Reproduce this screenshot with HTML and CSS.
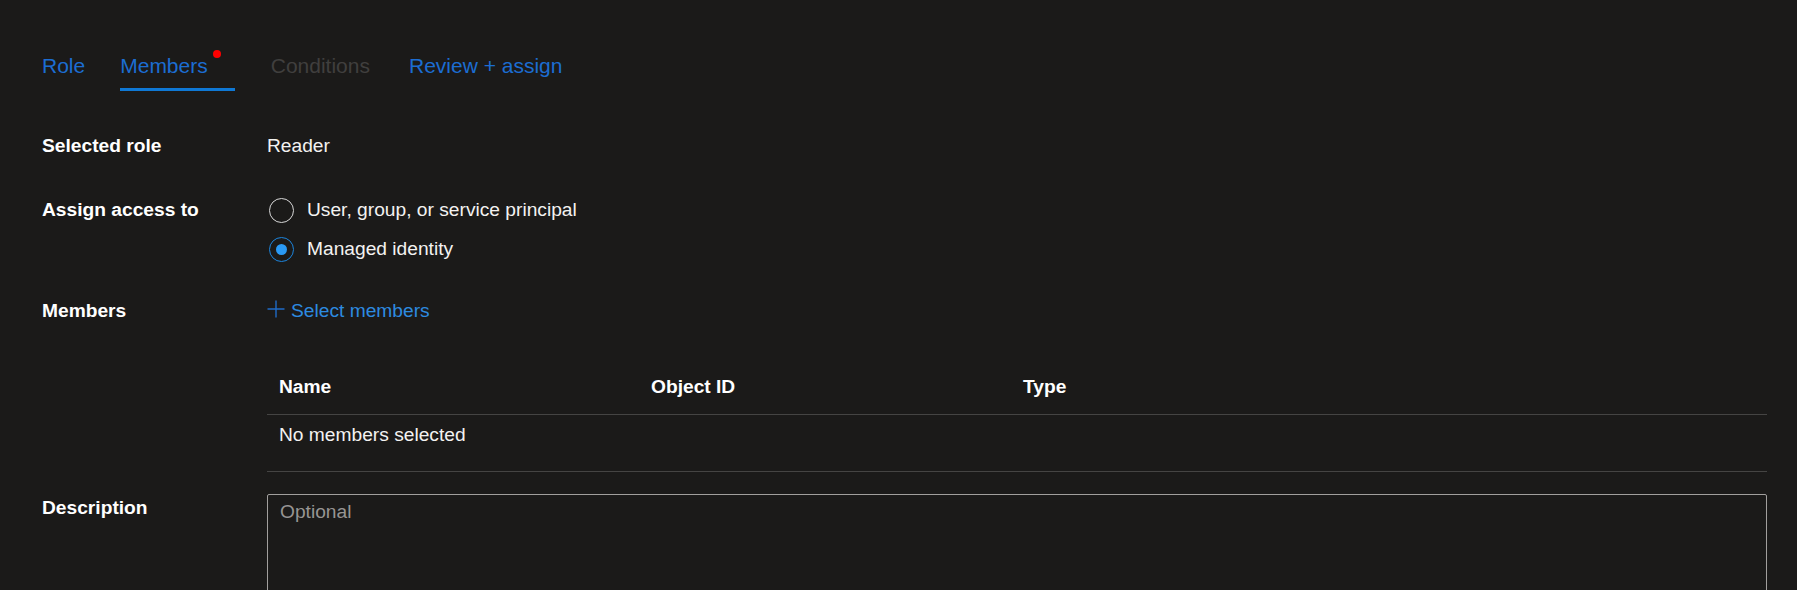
FILE: index.html
```html
<!DOCTYPE html>
<html lang="en">
<head>
<meta charset="utf-8">
<title>Add role assignment - Members</title>
<link rel="stylesheet" href="styles.css">
</head>
<body>
<div class="page">
  <nav class="tabs">
    <span class="tab tab-role">Role</span>
    <span class="tab tab-active">Members<span class="tab-dot"></span></span>
    <span class="tab tab-disabled">Conditions</span>
    <span class="tab tab-review">Review + assign</span>
  </nav>

  <div class="form">
    <div class="row">
      <div class="label">Selected role</div>
      <div class="value">Reader</div>
    </div>

    <div class="row row-access">
      <div class="label">Assign access to</div>
      <div class="value radios">
        <div class="option">
          <span class="radio"></span>
          <span>User, group, or service principal</span>
        </div>
        <div class="option">
          <span class="radio radio-checked"></span>
          <span>Managed identity</span>
        </div>
      </div>
    </div>

    <div class="row row-members">
      <div class="label">Members</div>
      <div class="value">
        <div class="add-link">
          <svg class="plus" width="18" height="18" viewBox="0 0 18 18" aria-hidden="true">
            <path d="M9 0.5V17.5M0.5 9H17.5" stroke="#1f6bc7" stroke-width="1.4" fill="none"/>
          </svg>
          <span>Select members</span>
        </div>
        <table class="members">
          <colgroup>
            <col class="col-fixed">
            <col class="col-fixed">
            <col>
          </colgroup>
          <thead>
            <tr><th>Name</th><th>Object ID</th><th>Type</th></tr>
          </thead>
          <tbody>
            <tr><td colspan="3">No members selected</td></tr>
          </tbody>
        </table>
      </div>
    </div>

    <div class="row row-desc">
      <div class="label">Description</div>
      <div class="value">
        <textarea class="desc" placeholder="Optional"></textarea>
      </div>
    </div>
  </div>
</div>
</body>
</html>
```

FILE: styles.css
```css
* { box-sizing: border-box; }

html, body {
  margin: 0;
  background: #1b1a19;
  height: 100%;
  overflow: hidden;
}

body {
  font-family: "Liberation Sans", Arial, sans-serif;
  font-size: 19.2px;
  line-height: 28px;
  color: #f3f2f1;
}

.page {
  padding: 52px 30px 0 42px;
}

/* Tabs */
.tabs {
  display: flex;
  gap: 36px;
  font-size: 21px;
  line-height: 28px;
}

.tab {
  position: relative;
  color: #1c6dd2;
  padding-bottom: 8px;
  border-bottom: 3px solid transparent;
}

.tab-role {
  margin-right: -1px;
}

.tab-review {
  margin-left: 3px;
}

.tab-active {
  padding-right: 27px;
  border-bottom-color: #0f78d4;
}

.tab-dot {
  position: absolute;
  left: 93px;
  top: -2px;
  width: 8px;
  height: 8px;
  border-radius: 50%;
  background: #ff0000;
}

.tab-disabled {
  color: #403f3e;
}

/* Form */
.form {
  margin-top: 41px;
}

.row {
  display: grid;
  grid-template-columns: 225px 1fr;
  align-items: start;
}

.row + .row {
  margin-top: 35px;
}

.row.row-access {
  margin-top: 36px;
}

.row.row-members {
  margin-top: 34px;
}

.row.row-desc {
  margin-top: 22px;
}

.label {
  font-weight: bold;
  color: #ffffff;
}

.value {
  min-width: 0;
}

.radios {
  display: flex;
  flex-direction: column;
  gap: 11px;
}

.option {
  display: flex;
  align-items: center;
  gap: 13px;
  height: 28px;
  padding-left: 2px;
}

.radio {
  width: 25px;
  height: 25px;
  border-radius: 50%;
  border: 1.5px solid #d6d6d6;
  display: flex;
  align-items: center;
  justify-content: center;
  flex: none;
}

.radio-checked {
  border-color: #1c84dc;
}

.radio-checked::after {
  content: "";
  width: 11px;
  height: 11px;
  border-radius: 50%;
  background: #2a9af5;
}

.add-link {
  display: flex;
  align-items: center;
  gap: 6px;
  color: #2d8be0;
  height: 28px;
}

.plus {
  display: block;
  margin-top: -5px;
}

/* Table */
.members {
  width: 100%;
  margin-top: 36px;
  border-collapse: collapse;
  table-layout: fixed;
}

.col-fixed {
  width: 372px;
}

.members th {
  text-align: left;
  font-weight: bold;
  color: #ffffff;
  padding: 12px 12px 13px;
  border-bottom: 1px solid #454443;
}

.members td {
  padding: 6px 12px 22px;
  border-bottom: 1px solid #454443;
  color: #f3f2f1;
}

/* Description */
.desc {
  display: block;
  width: 100%;
  height: 150px;
  resize: none;
  background: transparent;
  border: 1px solid #a19f9d;
  border-radius: 2px;
  padding: 3px 12px;
  font-family: "Liberation Sans", Arial, sans-serif;
  font-size: 19.2px;
  line-height: 28px;
  color: #f3f2f1;
  outline: none;
}

.desc::placeholder {
  color: #979593;
}
```
